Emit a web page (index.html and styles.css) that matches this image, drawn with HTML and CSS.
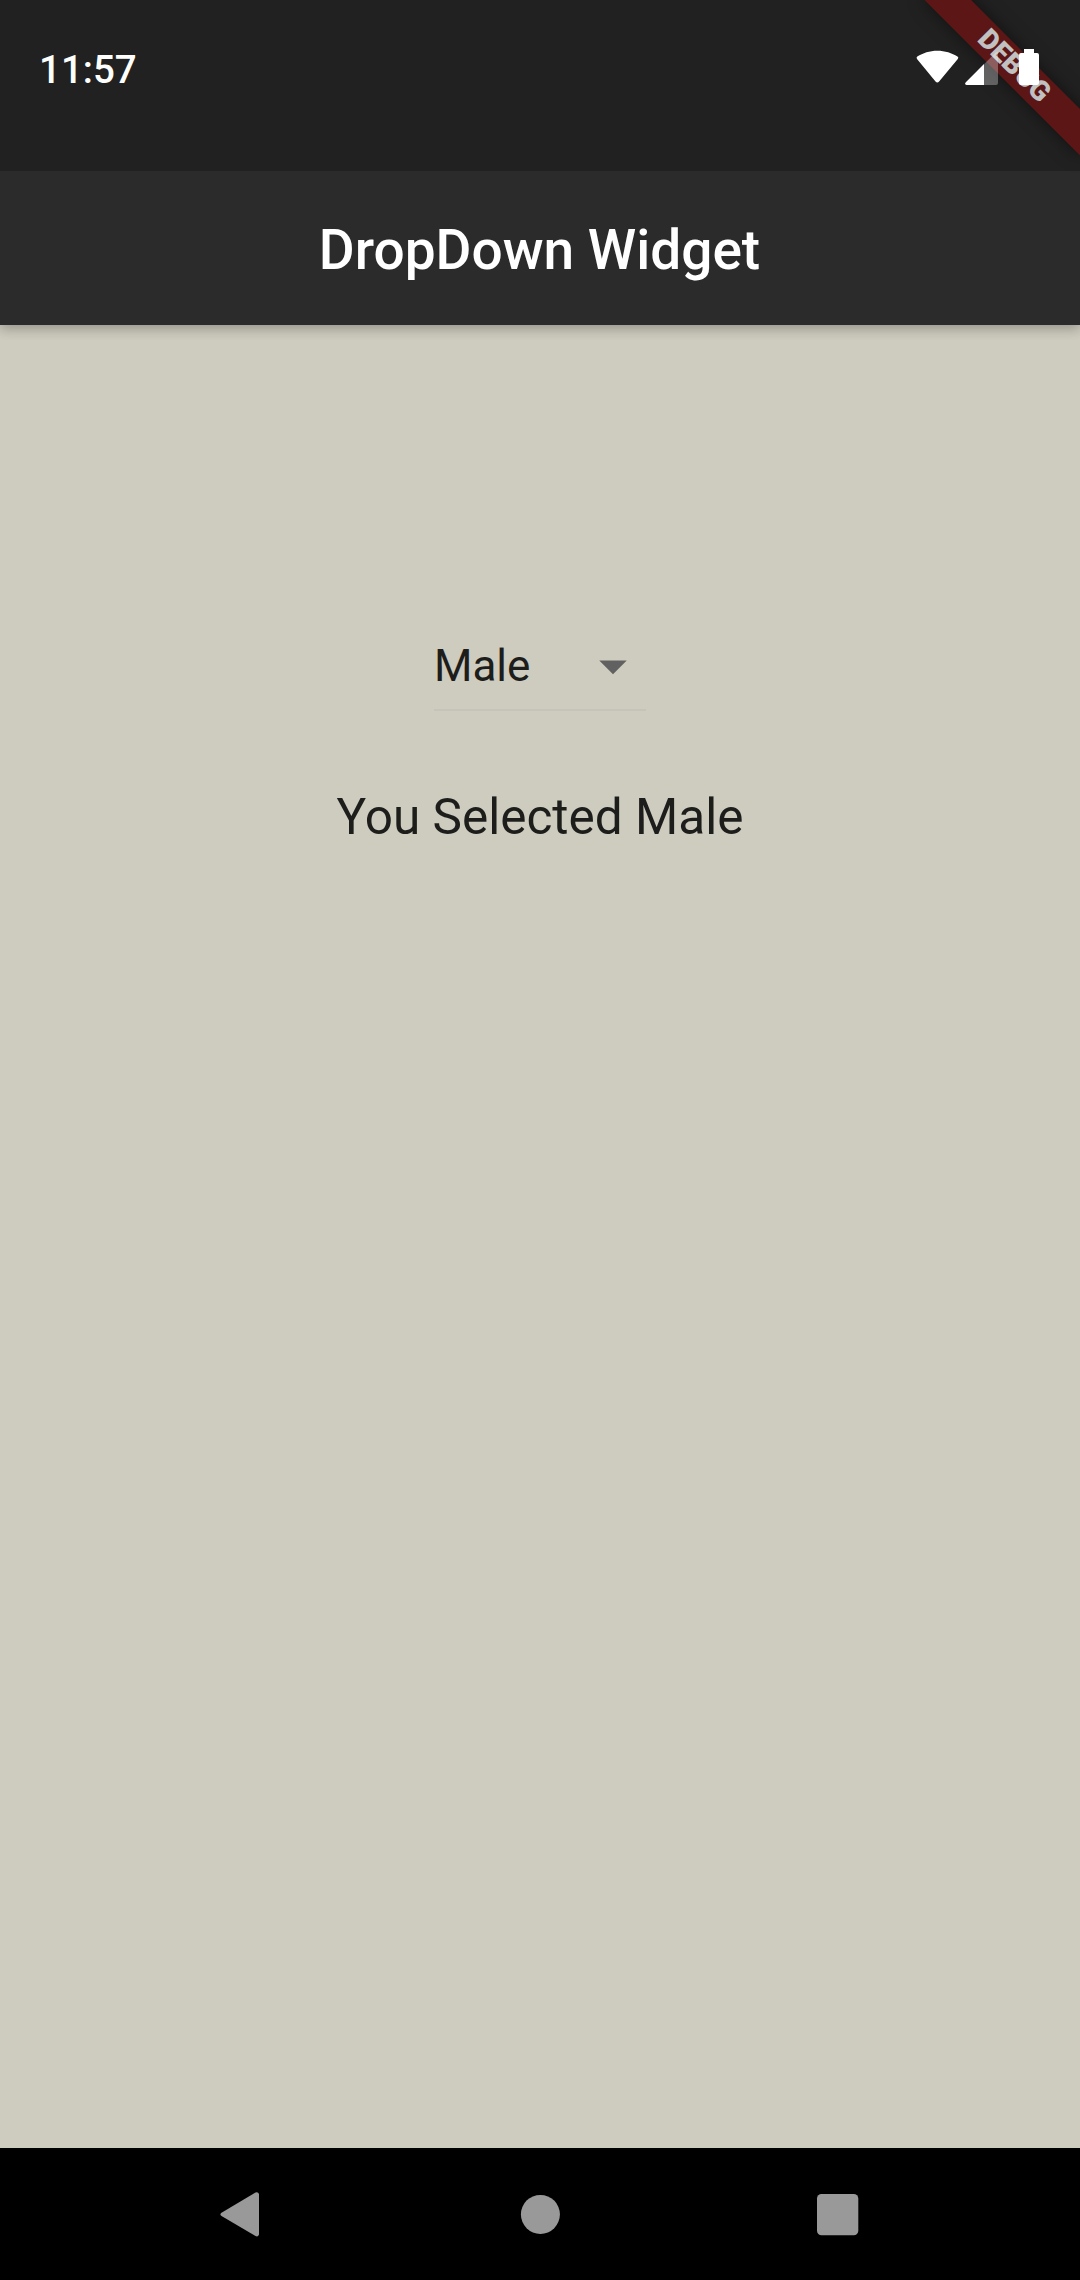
FILE: index.html
```
<!DOCTYPE html>
<html lang="en">
<head>
<meta charset="utf-8">
<title>DropDown Widget</title>
<link rel="stylesheet" href="styles.css">
</head>
<body>
<div class="screen">
  <div class="banner-clip"><div class="banner">DEBUG</div></div>
  <div class="status-bar">
    <span class="clock">11:57</span>
    <div class="status-icons">
      <svg class="wifi" width="43" height="36" viewBox="0 0 43 36"><path d="M21.300 1.700C13.500 1.700 7 4 1.300 7.600Q0 8.500 1 9.900L19.500 32.500Q21.300 34.700 23.100 32.500L41.800 9.900Q43 8.500 41.500 7.600C36 4 29 1.700 21.300 1.700Z" fill="#fff"/></svg>
      <svg class="signal" width="33" height="36" viewBox="0 0 33 36"><path d="M19 15.200 30.500 3.700Q33 1.500 33 4.500V34Q33 36 31 36H19Z" fill="#fff" fill-opacity=".3"/><path d="M19 15V36H1.500Q-.8 35.700.6 33.400Z" fill="#fff"/></svg>
      <svg class="battery" width="20" height="36" viewBox="0 0 20 36"><path d="M5 0H15V4H18Q20 4 20 6V34Q20 36 18 36H2Q0 36 0 34V6Q0 4 2 4H5Z" fill="#fff"/></svg>
    </div>
  </div>
  <header class="app-bar"><h1 class="title">DropDown Widget</h1></header>
  <main class="content">
    <div class="dropdown">
      <span class="value">Male</span>
      <svg class="arrow" width="66" height="66" viewBox="0 0 24 24"><path d="M7 10l5 5 5-5z" fill="#616161"/></svg>
    </div>
    <p class="message">You Selected Male</p>
  </main>
  <nav class="nav-bar">
    <svg class="nav-icon" width="66" height="66" viewBox="0 0 66 66"><path d="M12.500 31.700 46.500 11.500Q49 10.500 50 12.900V53.400Q49 56.300 46.500 55L12.500 35.100Q10.300 33.400 12.500 31.700Z" fill="#999"/></svg>
    <svg class="nav-icon" width="66" height="66" viewBox="0 0 66 66"><circle cx="33.400" cy="33.400" r="19.500" fill="#999"/></svg>
    <svg class="nav-icon" width="66" height="66" viewBox="0 0 66 66"><rect x="12" y="13" width="41.300" height="41.300" rx="4.500" fill="#999"/></svg>
  </nav>
</div>
</body>
</html>
```
FILE: styles.css
```
body {
  margin: 0;
  font-family: Roboto, "Liberation Sans", sans-serif;
}

.screen {
  position: relative;
  display: flex;
  flex-direction: column;
  height: 2280px;
  background: #ceccbe;
}

.status-bar {
  display: flex;
  justify-content: space-between;
  box-sizing: border-box;
  height: 171px;
  padding: 0 41px 0 39px;
  background: #212121;
}

.clock {
  margin-top: 47px;
  font-size: 38.5px;
  line-height: 46px;
  font-weight: 500;
  color: #fff;
}

.status-icons {
  position: relative;
  z-index: 2;
  display: flex;
  height: 36px;
  margin-top: 49px;
}

.signal {
  margin-left: 6px;
}

.battery {
  margin-left: 21px;
}

.banner-clip {
  position: absolute;
  z-index: 1;
  top: 0;
  right: 0;
  width: 260px;
  height: 260px;
  overflow: hidden;
}

/* Ribbon across the top-right corner */
.banner {
  position: absolute;
  top: 77px;
  left: 150px;
  width: 220px;
  height: 33px;
  transform: rotate(45deg);
  transform-origin: 110px -77px;
  background: #5c1616;
  box-shadow: 0 0 17px rgba(0, 0, 0, 0.5);
  font-size: 28.05px;
  line-height: 32px;
  font-weight: 900;
  text-align: center;
  color: #c1c1c1;
}

.app-bar {
  display: flex;
  align-items: center;
  justify-content: center;
  box-sizing: border-box;
  height: 154px;
  padding: 4px 1px 0 0;
  background: #2b2b2b;
  box-shadow: 0 4px 11px rgba(0, 0, 0, 0.18), 0 2px 14px rgba(0, 0, 0, 0.12);
  clip-path: inset(0 0 -30px 0);
}

.title {
  margin: 0;
  font-size: 55px;
  line-height: 64px;
  font-weight: 500;
  color: #fff;
}

.content {
  display: flex;
  flex: 1;
  flex-direction: column;
  align-items: center;
  padding-top: 297px;
  color: #1d1d1b;
}

.dropdown {
  display: flex;
  align-items: center;
  justify-content: space-between;
  box-sizing: border-box;
  width: 212px;
  height: 89px;
  border-bottom: 2px solid #c6c3ba;
}

.value {
  font-size: 44px;
  line-height: 52px;
}

.message {
  margin: 77px 0 0;
  font-size: 49.5px;
  line-height: 58px;
}

.nav-bar {
  display: flex;
  justify-content: space-between;
  align-items: center;
  height: 132px;
  padding: 0 209px;
  background: #000;
}
```
